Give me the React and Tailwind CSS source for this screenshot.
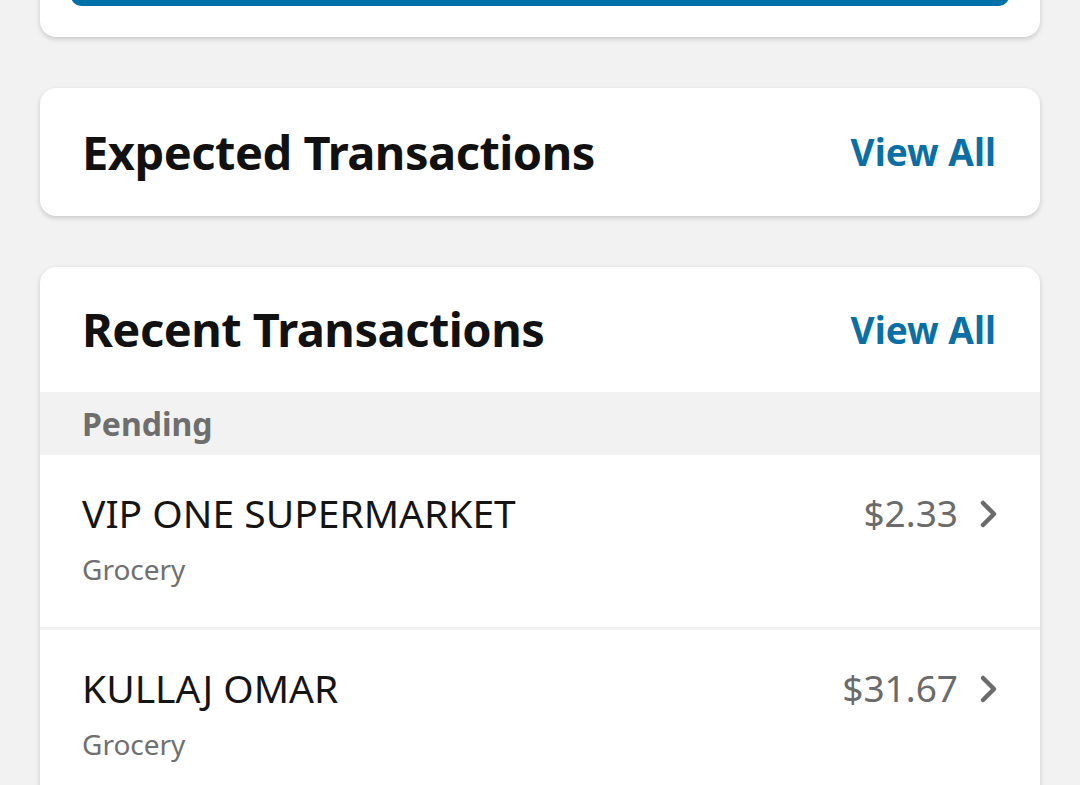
import React from 'react'

const font = { fontFamily: '"Noto Sans", "Open Sans", sans-serif' }

const Chevron = () => (
  <svg width="22" height="30" viewBox="0 0 22 30" fill="none" className="ml-[20px]">
    <path d="M5 4 L16 15 L5 26" stroke="#6b6b6b" strokeWidth="4.5" strokeLinecap="round" strokeLinejoin="round" />
  </svg>
)

const CardHeader = ({ title }) => (
  <div className="flex items-center justify-between pl-[42px] pr-[44px]">
    <h2 className="text-[47px] font-bold text-[#111] tracking-[-0.5px]">{title}</h2>
    <button className="text-[37px] font-bold text-[#0b6fa6]">View All</button>
  </div>
)

const TransactionRow = ({ name, category, amount, last }) => (
  <div className={`flex justify-between pl-[42px] pr-[40px] pt-[34px] pb-[38px] ${last ? '' : 'border-b-[3px] border-[#f3f3f3]'}`}>
    <div className="flex flex-col">
      <span className="text-[39px] leading-[48px] text-[#151515]">{name}</span>
      <span className="mt-[12px] text-[28px] leading-[40px] text-[#707070]">{category}</span>
    </div>
    <div className="flex items-start pt-[2px]">
      <span className="text-[37px] leading-[44px] text-[#6b6b6b]">{amount}</span>
      <div className="pt-[8px]"><Chevron /></div>
    </div>
  </div>
)

export default function App() {
  return (
    <div style={font} className="w-[1080px] h-[785px] overflow-hidden bg-[#f2f2f2]">
      <div className="mx-[40px] -mt-[40px] bg-white rounded-b-[16px] shadow-[0_2px_5px_rgba(0,0,0,0.18)] px-[31px] pb-[31px]">
        <div className="h-[46px] bg-[#0070a8] rounded-b-[10px]" />
      </div>

      <div className="mx-[40px] mt-[51px] h-[128px] bg-white rounded-[16px] shadow-[0_2px_5px_rgba(0,0,0,0.18)] flex flex-col justify-center">
        <CardHeader title="Expected Transactions" />
      </div>

      <div className="mx-[40px] mt-[51px] bg-white rounded-t-[16px] shadow-[0_2px_5px_rgba(0,0,0,0.18)]">
        <div className="h-[125px] flex flex-col justify-center">
          <CardHeader title="Recent Transactions" />
        </div>
        <div className="h-[63px] bg-[#f2f2f2] pl-[42px] flex items-center">
          <span className="text-[32px] font-bold text-[#6e6e6e]">Pending</span>
        </div>
        <TransactionRow name="VIP ONE SUPERMARKET" category="Grocery" amount="$2.33" />
        <TransactionRow name="KULLAJ OMAR" category="Grocery" amount="$31.67" last />
      </div>
    </div>
  )
}
